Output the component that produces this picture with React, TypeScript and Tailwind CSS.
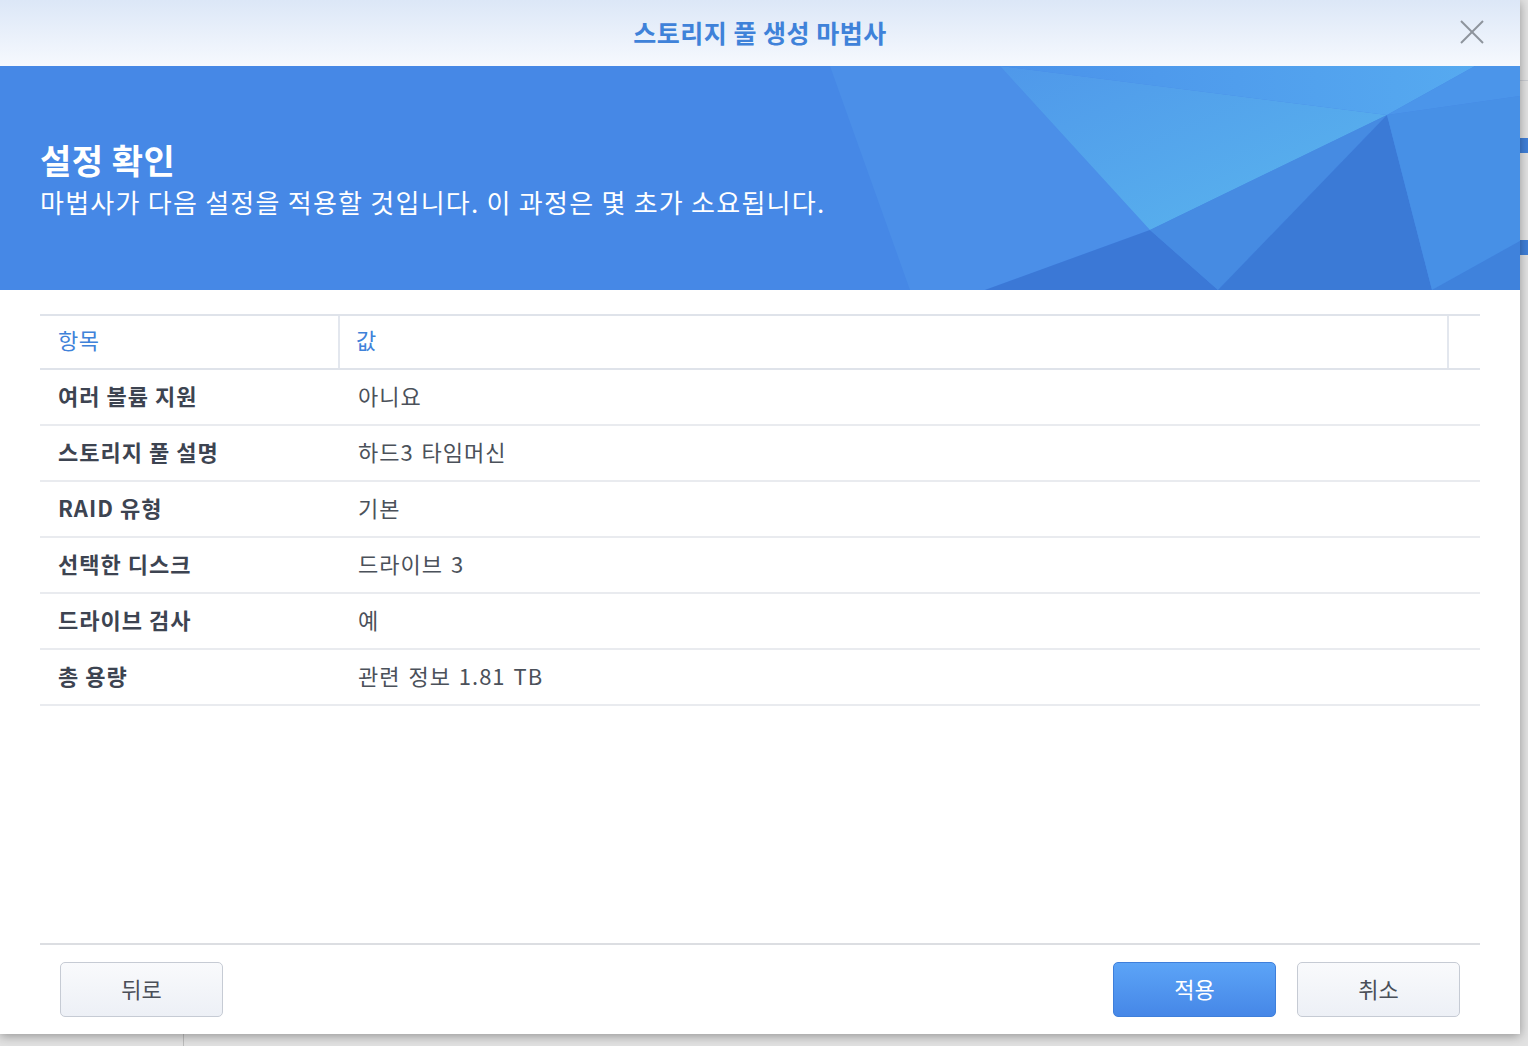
import React from 'react';

const rows = [
  { label: '여러 볼륨 지원', value: '아니요' },
  { label: '스토리지 풀 설명', value: '하드3 타임머신' },
  { label: 'RAID 유형', value: '기본' },
  { label: '선택한 디스크', value: '드라이브 3' },
  { label: '드라이브 검사', value: '예' },
  { label: '총 용량', value: '관련 정보 1.81 TB' },
];

// decorative low-poly shapes on the right side of the banner
function BannerArt() {
  return (
    <svg className="absolute inset-0 h-full w-full" viewBox="0 0 1520 224" preserveAspectRatio="none">
      <defs>
        <linearGradient id="cyan" x1="0" y1="0" x2="1" y2="1">
          <stop offset="0" stopColor="#4f98ea" />
          <stop offset="1" stopColor="#5ab6ee" />
        </linearGradient>
        <linearGradient id="topstrip" x1="0" y1="0" x2="1" y2="0">
          <stop offset="0" stopColor="#4a92ea" />
          <stop offset="1" stopColor="#56aaf0" />
        </linearGradient>
      </defs>
      <polygon points="830,0 1000,0 1150,164 985,224 910,224" fill="#4b8fe8" />
      <polygon points="1000,0 1387,49 1150,164" fill="url(#cyan)" />
      <polygon points="1000,0 1475,0 1387,49" fill="url(#topstrip)" />
      <polygon points="1475,0 1520,0 1520,30 1387,49" fill="#4b95ea" />
      <polygon points="1150,164 1218,224 985,224" fill="#3b78d6" />
      <polygon points="1150,164 1387,49 1218,224" fill="#468be2" />
      <polygon points="1218,224 1387,49 1432,224" fill="#3b7ad6" />
      <polygon points="1387,49 1520,30 1520,175 1432,224" fill="#4790e6" />
      <polygon points="1432,224 1520,175 1520,224" fill="#3f82dc" />
    </svg>
  );
}

export default function App() {
  return (
    <div className="relative h-[1046px] w-full overflow-hidden bg-[#e2e2e2] font-['Noto_Sans_CJK_KR','Noto_Sans',sans-serif]">
      {/* bits of the window behind */}
      <div className="absolute left-[1520px] top-[80px] h-[1px] w-[8px] bg-[#c9ccd2]" />
      <div className="absolute left-[1520px] top-[138px] h-[15px] w-[8px] bg-[#3f7fd8]" />
      <div className="absolute left-[1520px] top-[240px] h-[15px] w-[8px] bg-[#3f7fd8]" />
      <div className="absolute left-[183px] top-[1034px] h-[12px] w-[1px] bg-[#bdbdbd]" />

      <div className="relative flex h-[1034px] w-[1520px] flex-col bg-white shadow-[0_2px_10px_rgba(0,0,0,0.35)]">
        {/* title bar */}
        <div className="relative flex h-[66px] items-center justify-center bg-gradient-to-b from-[#dce7f7] to-[#f6f9fe]">
          <span className="text-[25px] font-bold tracking-[0.5px] text-[#3f82d9]">스토리지 풀 생성 마법사</span>
          <button className="absolute right-[36px] top-[20px] h-[24px] w-[24px]">
            <svg viewBox="0 0 24 24" className="h-[24px] w-[24px]" stroke="#8e949c" strokeWidth="2">
              <line x1="1" y1="1" x2="23" y2="23" />
              <line x1="23" y1="1" x2="1" y2="23" />
            </svg>
          </button>
        </div>

        {/* banner */}
        <div className="relative h-[224px] overflow-hidden bg-[#4688e6]">
          <BannerArt />
          <div className="relative pl-[40px] pt-[74px] text-white">
            <h1 className="text-[34px] font-bold leading-[40px] tracking-[0.5px]">설정 확인</h1>
            <p className="mt-[6px] text-[26px] leading-[32px] tracking-[1.25px]">
              마법사가 다음 설정을 적용할 것입니다. 이 과정은 몇 초가 소요됩니다.
            </p>
          </div>
        </div>

        {/* summary table */}
        <div className="flex-1 px-[40px] pt-[24px]">
          <div className="flex h-[56px] border-y-2 border-[#dfe3ea] text-[22px] tracking-[0.5px] text-[#3f82d9]">
            <div className="flex w-[300px] items-center border-r-2 border-[#e3e7ee] pb-[5px] pl-[18px]">항목</div>
            <div className="flex flex-1 items-center border-r-2 border-[#e3e7ee] pb-[5px] pl-[16px]">값</div>
            <div className="w-[31px]" />
          </div>
          {rows.map((r) => (
            <div key={r.label} className="flex h-[56px] items-center border-b-2 border-[#e9ebef] pb-[4px] text-[22px] tracking-[1px]">
              <div className="w-[302px] pl-[18px] font-bold text-[#3d4451]">{r.label}</div>
              <div className="pl-[16px] text-[#4b515a] [word-spacing:2px]">{r.value}</div>
            </div>
          ))}
        </div>

        {/* footer */}
        <div className="mx-[40px] flex items-center justify-between border-t-2 border-[#dcdee2] px-[20px] pb-[17px] pt-[17px]">
          <button className="h-[55px] w-[163px] rounded-[5px] border border-[#c6cbd4] bg-gradient-to-b from-[#f9fafc] to-[#edf0f6] pb-[3px] text-[22px] text-[#4a4f58]">
            뒤로
          </button>
          <div className="flex gap-[21px]">
            <button className="h-[55px] w-[163px] rounded-[5px] border border-[#3e7fdb] bg-gradient-to-b from-[#5ca4f7] to-[#4687e7] pb-[3px] text-[22px] text-white">
              적용
            </button>
            <button className="h-[55px] w-[163px] rounded-[5px] border border-[#c6cbd4] bg-gradient-to-b from-[#f9fafc] to-[#edf0f6] pb-[3px] text-[22px] text-[#4a4f58]">
              취소
            </button>
          </div>
        </div>
      </div>
    </div>
  );
}
